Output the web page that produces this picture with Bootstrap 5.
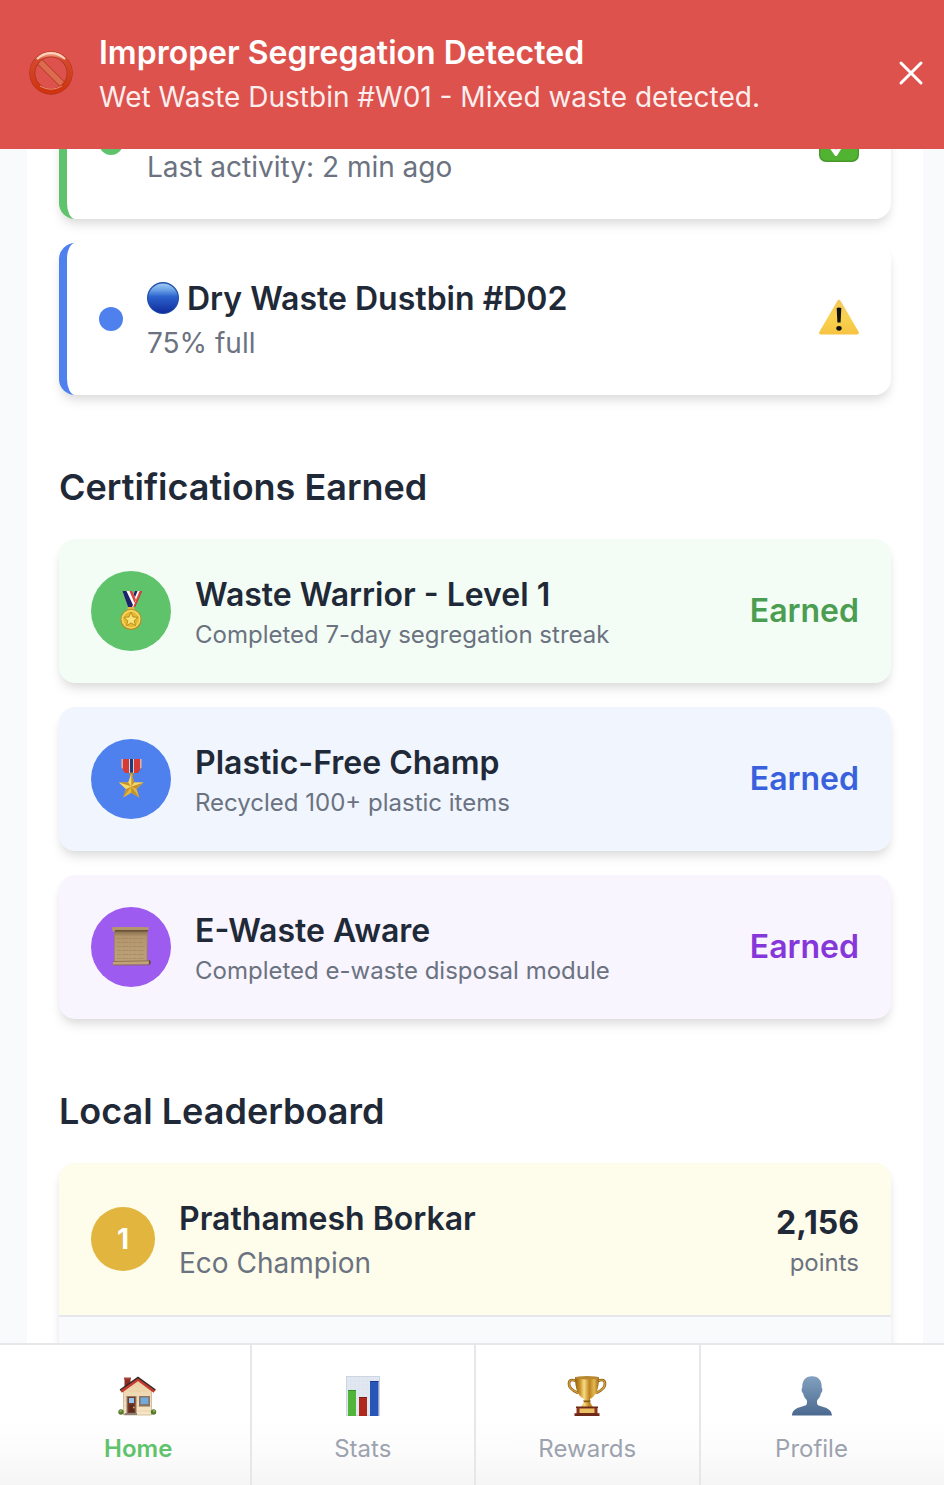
<!DOCTYPE html>
<html lang="en">
<head>
<meta charset="utf-8">
<meta name="viewport" content="width=device-width, initial-scale=1">
<title>Waste Segregation</title>
<link href="https://cdn.jsdelivr.net/npm/bootstrap@5.3.0/dist/css/bootstrap.min.css" rel="stylesheet">
<style>
body{font-family:Inter,"Liberation Sans",sans-serif;background:#f9fafb;color:#1f2937;height:100vh;overflow:hidden;font-size:32px;line-height:48px}
svg{display:block;flex:none}
.alert-bar{height:149px;background:#dd524c;color:#fff;padding:0 17px 4px 27px;z-index:1040}
.t-base{font-size:32px;line-height:48px}
.t-sm{font-size:28px;line-height:40px}
.t-xs{font-size:24px;line-height:32px}
.copy{margin-left:24px}
.soft{opacity:.9}
.muted{color:#6b7280}
.page{width:896px;margin-left:27px;padding:67px 32px 0;background:#fff;height:100vh}
.h-sec{font-size:36px;line-height:56px;margin:64px 0 24px;font-weight:600}
.stack{gap:24px}
.tile{border-radius:16px;padding:32px;box-shadow:0 8px 12px -2px rgba(0,0,0,.1),0 4px 8px -2px rgba(0,0,0,.06)}
.bin{background:#fff;border-left:8px solid #5fc36c}
.bin-blue{border-color:#4f81ee}
.under-bar{padding-top:48px}
.ball{margin:-2px 8px 0 0}
.dot{width:24px;height:24px;background:#5fc36c;flex:none}
.bin-blue .dot{background:#4f81ee}
.disc{width:80px;height:80px;flex:none}
.c-green{background:#f3fdf5}.c-green .disc{background:#5fc36c}.c-green .earned{color:#4b9e51}
.c-blue{background:#f0f5fe}.c-blue .disc{background:#4f81ee}.c-blue .earned{color:#3961dd}
.c-purple{background:#f8f5fe}.c-purple .disc{background:#9d5bef}.c-purple .earned{color:#8637da}
.board{padding:0;overflow:hidden;background:#f9fafb;height:320px}
.rank-row{background:#fefceb;padding:32px;border-bottom:2px solid #e5e7eb;height:154px}
.rank{width:64px;height:64px;background:#e1b53e;color:#fff;flex:none}
.tabs{height:142px;background:linear-gradient(#fff 50%,#fcfcfc 75%,#f5f5f5);border-top:2px solid #e5e7eb;padding-left:27px}
.tab{width:224.5px;border-right:2px solid #e5e7eb;color:#9ca3af;padding-top:31px}
.tab:last-child{border-right:0;width:222px}
.tab .t-xs{margin-top:17px}
.tab.on{color:#5fc36c}
</style>
</head>
<body>
<div class="alert-bar fixed-top d-flex align-items-center" role="alert">
  <svg width="48" height="48" viewBox="0 0 48 48">
    <defs><linearGradient id="ring" x1="0" y1="0" x2="0" y2="1"><stop offset="0" stop-color="#f5a083"/><stop offset=".15" stop-color="#d5492e"/><stop offset="1" stop-color="#d0330f"/></linearGradient></defs>
    <path d="M11 11 37 37" stroke="#b53a20" stroke-width="7"/><path d="M11 11 37 37" stroke="#dd6b50" stroke-width="5.4"/>
    <circle cx="24" cy="24" r="18.700" fill="none" stroke="#a8321b" stroke-width="6"/>
    <circle cx="24" cy="24" r="18.800" fill="none" stroke="url(#ring)" stroke-width="4.800"/>
    <path d="M10 10q14-12 28 0" fill="none" stroke="#ffd3bd" stroke-width="2"/><path d="M13 37q11 6.500 22 0" fill="none" stroke="#f08e76"/>
  </svg>
  <div class="flex-grow-1 copy"><div class="t-base fw-semibold">Improper Segregation Detected</div><div class="t-sm soft">Wet Waste Dustbin #W01 - Mixed waste detected.</div></div>
  <svg width="32" height="32" viewBox="0 0 32 32"><path d="m6 6 20 20m0-20L6 26" stroke="#fff" stroke-width="3" stroke-linecap="round"/></svg>
</div>

<main class="page">
  <div class="d-flex flex-column stack">
    <div class="tile bin d-flex align-items-center">
      <div class="dot rounded-circle"></div>
      <div class="flex-grow-1 copy under-bar"><div class="t-sm muted">Last activity: 2 min ago</div></div>
      <svg width="40" height="40" viewBox="0 0 40 40"><rect y="1" width="40" height="38" rx="7" fill="#46982e"/><rect x="1.300" y="2" width="37.400" height="35.500" rx="6" fill="#52b332"/><path d="m7 19 4-1 6 9L28 6h5L21.500 27 17.800 33h-1.600L12 27z" fill="#fff"/></svg>
    </div>
    <div class="tile bin bin-blue d-flex align-items-center">
      <div class="dot rounded-circle"></div>
      <div class="flex-grow-1 copy"><div class="t-base fw-semibold d-flex align-items-center">
        <svg class="ball" width="32" height="32" viewBox="0 0 32 32"><defs><linearGradient id="ball" x1="0" y1="0" x2="0" y2="1"><stop offset="0" stop-color="#9fcaf6"/><stop offset=".22" stop-color="#6ba2e6"/><stop offset=".45" stop-color="#2c62cd"/><stop offset="1" stop-color="#102d9c"/></linearGradient></defs><circle cx="16" cy="16" r="16" fill="#214fa9"/><circle cx="16" cy="16.200" r="14.800" fill="url(#ball)"/></svg>
        <span>Dry Waste Dustbin #D02</span></div><div class="t-sm muted">75% full</div></div>
      <svg width="40" height="40" viewBox="0 0 40 40"><defs><linearGradient id="warn" x1="0" y1="0" x2="0" y2="1"><stop offset="0" stop-color="#f3c75e"/><stop offset=".5" stop-color="#f8d350"/><stop offset="1" stop-color="#f6c341"/></linearGradient></defs><path d="M18.300 2q1.700-2.600 3.400 0l18 31q.8 2-1.500 2.500H1.800Q-.5 35 .3 33z" fill="url(#warn)"/><path d="M17.700 9q2.300-1.200 4.600 0l-.7 14.500h-3.200z" fill="#111"/><ellipse cx="20" cy="29.300" rx="2.700" ry="2.400" fill="#111"/></svg>
    </div>
  </div>

  <h2 class="h-sec">Certifications Earned</h2>
  <div class="d-flex flex-column stack">
    <div class="tile c-green d-flex align-items-center">
      <div class="disc rounded-circle d-flex align-items-center justify-content-center">
        <svg width="40" height="40" viewBox="0 0 40 40"><path d="M31.500-1h-7L17 16h7z" fill="#23236d"/><path d="M30-1h-3L20 16h3z" fill="#fff"/><path d="M31.500-1H29l-7 17h2z" fill="#e54338"/><path d="M11-1h10l4 10-3 7h-5z" fill="#fff"/><path d="M11-1h4l7 15-1 2h-4z" fill="#1c2369"/><path d="M18-1h3l4 10-1.500 3z" fill="#d9473e"/><path d="M17 16h6l1 4h-8z" fill="#dfb545"/><circle cx="20" cy="28.500" r="10.500" fill="#b98619"/><circle cx="20" cy="28.300" r="9.500" fill="#f5d765"/><circle cx="20" cy="28.500" r="7.800" fill="#e6b92f"/><path d="m20 21 2 5 5.200.3-4 3.400 1.300 5-4.500-2.800-4.500 2.800 1.300-5-4-3.400L18 26z" fill="#fae378" stroke="#b4861b" stroke-width=".9"/></svg>
      </div>
      <div class="flex-grow-1 copy"><div class="t-base fw-semibold">Waste Warrior - Level 1</div><div class="t-xs muted">Completed 7-day segregation streak</div></div>
      <span class="earned fw-semibold">Earned</span>
    </div>
    <div class="tile c-blue d-flex align-items-center">
      <div class="disc rounded-circle d-flex align-items-center justify-content-center">
        <svg width="40" height="40" viewBox="0 0 40 40"><path d="M10.500-1h20v9.500L27 14H14l-3.500-5.500z" fill="#d63c35"/><path d="M10.500-1h1.300v11l-1.300-1.500zM29.200-1h1.300v9.500L29.200 10z" fill="#ced4de"/><path d="M18-1h5v15h-5z" fill="#cdd5e5"/><path d="M19-1h3v15h-3z" fill="#233a7c"/><path d="M18.700 13.500h3.600V17h-3.600z" fill="#ba902b"/><path d="m20.300 14.500 3 9h9.200l-7 6.500 2.800 8.500-8-4.700-8 4.700L15 30l-7-6.500h9.300z" fill="#e5b83d"/><path d="m20.300 14.500 3 9-3 4zM32.500 23.500l-7 6.500-5.200-2.500zM28.300 38.500l-8-4.700v-6.300zM12.300 38.500 15 30l5.300-2.500zM8 23.500h9.300l3 4z" fill="#c3922f"/><path d="m20.300 14.500-3 9 3 4zM32.500 23.500h-9.200l-3 4zM8 23.500l7 6.500 5.300-2.500z" fill="#f5d869"/></svg>
      </div>
      <div class="flex-grow-1 copy"><div class="t-base fw-semibold">Plastic-Free Champ</div><div class="t-xs muted">Recycled 100+ plastic items</div></div>
      <span class="earned fw-semibold">Earned</span>
    </div>
    <div class="tile c-purple d-flex align-items-center">
      <div class="disc rounded-circle d-flex align-items-center justify-content-center">
        <svg width="40" height="40" viewBox="0 0 40 40"><defs><linearGradient id="paper" x1="0" y1="0" x2="0" y2="1"><stop offset="0" stop-color="#7e6445"/><stop offset=".2" stop-color="#b3966d"/><stop offset="1" stop-color="#bea27a"/></linearGradient></defs><path d="M3.500 3h33l-.8 33H3.500z" fill="url(#paper)"/><path d="M2-1 37.500.3q1 .6 0 1.800L36.500 3.500H4L2 5Q.3 2 2-1z" fill="#b4966c"/><path d="M4 3.700h33" stroke="#6a5136" stroke-width="1.600"/><path d="M3.500 6v29M36 5v29" stroke="#a0835c" stroke-width=".8"/><path d="M2 34.500 38 33.500v3.800L2 38z" fill="#c1a376"/><path d="M2 34.500l36-.7M2 38h36" stroke="#8a6d48" stroke-width=".9"/><path d="M38 33.500q2 2 0 4" fill="none" stroke="#67492c" stroke-width="1.500"/><g stroke="#a5885f" stroke-width=".8" stroke-dasharray="4 1 6 .8 3 1"><path d="M6 11.500h28M6 15.500h26M6 19.500h28M6 23.500h27M6 27.500h28M6 31.500h28"/></g></svg>
      </div>
      <div class="flex-grow-1 copy"><div class="t-base fw-semibold">E-Waste Aware</div><div class="t-xs muted">Completed e-waste disposal module</div></div>
      <span class="earned fw-semibold">Earned</span>
    </div>
  </div>

  <h2 class="h-sec">Local Leaderboard</h2>
  <div class="tile board">
    <div class="rank-row d-flex align-items-center">
      <div class="rank rounded-circle d-flex align-items-center justify-content-center t-sm fw-bold">1</div>
      <div class="flex-grow-1 copy"><div class="t-base fw-semibold">Prathamesh Borkar</div><div class="t-sm muted">Eco Champion</div></div>
      <div class="text-end"><div class="t-base fw-bold">2,156</div><div class="t-xs muted">points</div></div>
    </div>
  </div>
</main>

<nav class="tabs fixed-bottom d-flex">
  <div class="tab on d-flex flex-column align-items-center">
    <svg width="40" height="40" viewBox="0 0 40 40"><defs><linearGradient id="wall" x1="0" y1="0" x2="0" y2="1"><stop stop-color="#eacfa5"/><stop offset="1" stop-color="#f7e6c6"/></linearGradient></defs><path d="M6.500 2h6v11h-6z" fill="#8c2d24"/><path d="M6 1.500h7v2H6z" fill="#a94335"/><path d="M5.500 15 20 4l13.500 11v24h-28z" fill="url(#wall)" stroke="#c4aa82" stroke-width=".7"/><path d="M6 21h27M6 25h27M6 30h27M6 35h27M11 15h18" stroke="#e4ca9d" stroke-width=".6"/><path d="M3 15.500 20 3.200 36.500 15.500" fill="none" stroke="#c43a2e" stroke-width="3"/><path d="M2 14 20 1.500 37.500 14" fill="none" stroke="#342a29" stroke-width="1.500"/><path d="M8.500 20h10v18h-10z" fill="#927b68"/><path d="M9.700 21h7.600v16.500H9.700z" fill="#743827"/><path d="M11 22h5v5h-5z" fill="#91c7f1"/><path d="M11.300 29h4.700v7h-4.700z" fill="#5c2a1d"/><circle cx="15.800" cy="31.500" r="1" fill="#d5a247"/><path d="M21 20h11v10.500H21z" fill="#897563"/><path d="M22.700 21.500h7.600V28h-7.600z" fill="#73aadd"/><path d="M7 37h12v2H6z" fill="#898078"/><circle cx="3" cy="36" r="2.700" fill="#55792b"/><circle cx="35.500" cy="36" r="2.700" fill="#55792b"/><circle cx="2.600" cy="35" r="1.200" fill="#8bab51"/><circle cx="36" cy="35" r="1.200" fill="#8bab51"/></svg>
    <div class="t-xs fw-semibold">Home</div>
  </div>
  <div class="tab d-flex flex-column align-items-center">
    <svg width="40" height="40" viewBox="0 0 40 40"><path d="M3 0h34v40H3z" fill="#ccd6e2"/><path d="M4 1h32v38H4z" fill="#e1e8f1"/><path d="M8 1v38M12 1v38M16 1v38M20 1v38M24 1v38M4 5h32M4 9h32M4 13h32M4 17h32M4 21h32M4 25h32" stroke="#dae3ed" stroke-width=".5"/><path d="M5 14h8v26H5z" fill="#51b53b"/><path d="M16 21h8v19h-8z" fill="#af281c"/><path d="M27 5h8.500v35H27z" fill="#2855b8"/><path d="M5 14.500h8" stroke="#398d28"/><path d="M16 21.500h8" stroke="#821c16"/><path d="M27 5.500h8.500" stroke="#173b92"/></svg>
    <div class="t-xs">Stats</div>
  </div>
  <div class="tab d-flex flex-column align-items-center">
    <svg width="40" height="40" viewBox="0 0 40 40"><defs><linearGradient id="gold"><stop stop-color="#8f6014"/><stop offset=".2" stop-color="#c98f27"/><stop offset=".38" stop-color="#f7dc82"/><stop offset=".6" stop-color="#bd8220"/><stop offset=".8" stop-color="#e5b84f"/><stop offset="1" stop-color="#986516"/></linearGradient></defs><path d="M9 5Q2 2 2 8q0 5 9 9M31 5q7-3 7 3 0 5-9 9" fill="none" stroke="#8d5f15" stroke-width="2.700"/><path d="M9 5Q2 2 2 8q0 5 9 9M31 5q7-3 7 3 0 5-9 9" fill="none" stroke="#d9a640" stroke-width="1.200"/><path d="M8 1h24q0 18-9 22v3l3 5H14l3-5v-3Q8 19 8 1z" fill="url(#gold)"/><ellipse cx="20" cy="1.800" rx="12" ry="1.700" fill="#b88831"/><path d="M16 24.500h8l-1 1.700h-6z" fill="#8a5a13"/><path d="M9.500 31h21v7h-21z" fill="#8c341f"/><path d="M9 30.500h22V32H9zM7.500 37.300h25V40h-25z" fill="#6d2818"/><path d="M12.500 32.500h15v4.500h-15z" fill="#e9bf62"/></svg>
    <div class="t-xs">Rewards</div>
  </div>
  <div class="tab d-flex flex-column align-items-center">
    <svg width="40" height="40" viewBox="0 0 40 40"><defs><linearGradient id="person" x1="0" y1="0" x2="0" y2="1"><stop stop-color="#82a0bf"/><stop offset="1" stop-color="#4b698f"/></linearGradient></defs><path d="M20 .3c6.800 0 10 4.500 9.700 11.500 1.300.9.700 4.700-.8 5.400-.6 3.300-2 5.300-3.600 6.800-.5 1.800-.4 3.400.2 4.500 1.800 2.800 14 1.800 14.500 11H0c.5-9.200 12.700-8.200 14.500-11 .6-1.100.7-2.700.2-4.500-1.600-1.500-3-3.500-3.600-6.800-1.500-.7-2.100-4.500-.8-5.400C10 4.800 13.200.3 20 .3z" fill="url(#person)"/></svg>
    <div class="t-xs">Profile</div>
  </div>
</nav>
<script src="https://cdn.jsdelivr.net/npm/bootstrap@5.3.0/dist/js/bootstrap.bundle.min.js"></script>
</body>
</html>
